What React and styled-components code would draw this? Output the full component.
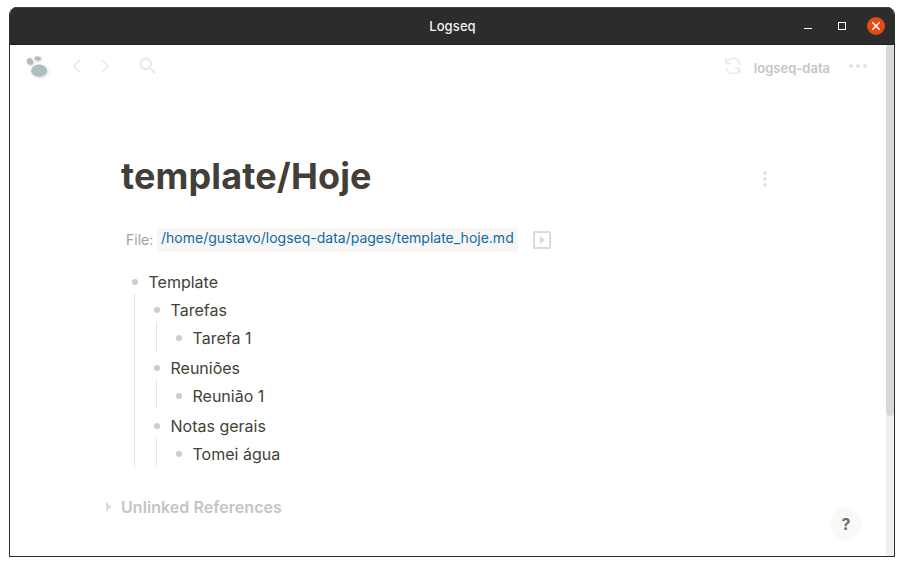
import React from "react";
import styled, { createGlobalStyle } from "styled-components";

const GlobalStyle = createGlobalStyle`
  * { box-sizing: border-box; }
  body { margin: 0; background: #fff; overflow: hidden; font-family: Inter, sans-serif; color: #433f38; }
`;

const Window = styled.div`
  display: flex;
  flex-direction: column;
  width: 886px;
  height: 550px;
  margin: 7px 9px 9px;
  border: 1px solid #2c2c2c;
  border-top: 0;
  border-radius: 8px 8px 0 0;
  overflow: hidden;
  background: #fff;
`;

const TitleBar = styled.header`
  display: grid;
  grid-template-columns: 1fr auto 1fr;
  align-items: center;
  flex: none;
  height: 38px;
  padding-right: 9px;
  background: #2c2c2c;
  border-top: 1px solid #454545;
  border-bottom: 1px solid #202020;
`;

const WindowTitle = styled.div`
  grid-column: 2;
  padding-left: 10px;
  font-size: 13px;
  line-height: 18px;
  font-weight: 500;
  letter-spacing: 0.1px;
  color: #f2f2f2;
`;

const WindowControls = styled.div`
  display: flex;
  justify-content: flex-end;
  svg { display: block; }
`;

const Body = styled.div`
  display: flex;
  flex: 1;
  min-height: 0;
`;

const Main = styled.main`
  position: relative;
  flex: 1;
`;

const ScrollTrack = styled.div`
  width: 8px;
  background: #f0f0f0;
`;

const ScrollThumb = styled.div`
  height: 371px;
  border-radius: 4px;
  background: #d8d8d8;
`;

const Toolbar = styled.nav`
  display: flex;
  align-items: center;
  height: 44px;
  padding: 0 16px 0 12px;
  svg { display: block; flex: none; }
`;

const LogoMark = styled.svg`
  filter: drop-shadow(1px 1px 1.5px rgba(0, 0, 0, 0.16));
`;

const Spacer = styled.div`
  flex: 1;
`;

const RepoName = styled.div`
  margin: 1px 16px 0 12px;
  font-size: 13px;
  line-height: 18px;
  font-weight: 600;
  color: #c6c5c3;
`;

const RaisedIcon = styled.svg`
  margin-bottom: 2px;
`;

const Page = styled.article`
  padding: 64px 115px 0 111px;
`;

const PageHeader = styled.div`
  display: flex;
  align-items: center;
  justify-content: space-between;
  height: 46px;
`;

const PageTitle = styled.h1`
  margin: 0;
  font-size: 36px;
  line-height: 46px;
  font-weight: 700;
  letter-spacing: 0.13px;
`;

const FileRow = styled.div`
  display: flex;
  align-items: center;
  height: 24px;
  margin: 29px 0 0 5px;
  font-size: 14px;
`;

const FileLabel = styled.span`
  width: 31px;
  padding-bottom: 1px;
  color: #a3a19d;
`;

const FilePath = styled.a`
  height: 24px;
  padding: 0 4px;
  border-radius: 3px;
  background: #f7f6f5;
  line-height: 20px;
  color: #106ba3;
`;

const PlayIcon = styled.svg`
  margin-left: 15px;
`;

const Outline = styled.div`
  margin: 14px 0 0 9px;
`;

const BlockRow = styled.div`
  display: flex;
  align-items: center;
  gap: 10.5px;
  height: 28px;
  padding: 4px 0 0 2px;
  font-size: 16px;
  line-height: 24px;
`;

const Bullet = styled.span`
  width: 6px;
  height: 6px;
  border-radius: 50%;
  background: #cdcccb;
`;

const Children = styled.div`
  margin: 0 0 ${(p) => (p.$last ? 0 : 1)}px 4px;
  padding: 0 0 ${(p) => (p.$leaf ? 1 : 0)}px 17px;
  border-left: 1px solid #e6e5e4;
`;

const References = styled.section`
  display: flex;
  align-items: center;
  gap: 9px;
  height: 24px;
  margin: 28px 0 0 -15px;
  font-size: 16px;
  font-weight: 600;
  letter-spacing: 0.06px;
  color: #c6c5c3;
`;

const HelpButton = styled.button`
  position: absolute;
  right: 24px;
  bottom: 16px;
  width: 32px;
  height: 32px;
  padding: 0;
  border: 0;
  border-radius: 50%;
  background: #f9f9f7;
  font: 700 16px/32px Inter, sans-serif;
  color: #716f6a;
`;

const outline = {
  text: "Template",
  children: [
    { text: "Tarefas", children: [{ text: "Tarefa 1" }] },
    { text: "Reuniões", children: [{ text: "Reunião 1" }] },
    { text: "Notas gerais", children: [{ text: "Tomei água" }] },
  ],
};

function Block({ block, last = true }) {
  return (
    <div>
      <BlockRow><Bullet /><span>{block.text}</span></BlockRow>
      {block.children && (
        <Children $last={last} $leaf={!block.children[0].children}>
          {block.children.map((child, i) => (
            <Block key={child.text} block={child} last={i === block.children.length - 1} />
          ))}
        </Children>
      )}
    </div>
  );
}

function Controls() {
  return (
    <WindowControls>
      <svg width="81" height="20" fill="none">
        <path d="M18 12.5h8" stroke="#fff" />
        <rect x="52.5" y="6.5" width="7" height="7" stroke="#fff" />
      </svg>
      <svg width="18" height="20" fill="none">
        <circle cx="9" cy="10" r="9" fill="#e24a17" />
        <path d="m5.3 6.3 7.4 7.4m0-7.4-7.4 7.4" stroke="#fff" strokeWidth="1.4" />
      </svg>
    </WindowControls>
  );
}

function Logo() {
  return (
    <LogoMark width="32" height="32">
      <g fill="#afbdc1">
        <ellipse cx="17" cy="19.7" rx="8" ry="6.1" />
        <ellipse cx="8" cy="10.5" rx="3.4" ry="3" transform="rotate(45 8 10.5)" />
        <ellipse cx="15.8" cy="7.5" rx="3.4" ry="2.1" transform="rotate(5 15.8 7.5)" />
      </g>
    </LogoMark>
  );
}

export default function App() {
  return (
    <>
      <GlobalStyle />
      <Window>
        <TitleBar>
          <WindowTitle>Logseq</WindowTitle>
          <Controls />
        </TitleBar>
        <Body>
          <Main>
            <Toolbar>
              <Logo />
              <svg width="80" height="24" fill="none" stroke="#e9e8e7" strokeWidth="1.5">
                <path d="m26 4.8-6.2 6.2 6.2 6.2M48 4.8l6.2 6.2-6.2 6.2" />
              </svg>
              <svg width="24" height="24" fill="none" stroke="#e9e8e7" strokeWidth="2">
                <circle cx="11.8" cy="8.7" r="5.3" />
                <path d="m15.7 12.6 5.5 5.5" />
              </svg>
              <Spacer />
              <RaisedIcon width="18" height="18" viewBox="0 0 18 18" fill="none" stroke="#eae9e8" strokeWidth="1.5">
                <path d="M1.9 1.5v5h5M2.2 6.2A7 7 0 0 1 15.8 7.6M16.1 16.5v-5h-5M15.8 11.8A7 7 0 0 1 2.2 10.4" />
              </RaisedIcon>
              <RepoName>logseq-data</RepoName>
              <RaisedIcon width="24" height="6" fill="#e4e3e2">
                <circle cx="5" cy="3" r="2" /><circle cx="12" cy="3" r="2" /><circle cx="19" cy="3" r="2" />
              </RaisedIcon>
            </Toolbar>
            <Page>
              <PageHeader>
                <PageTitle>template/Hoje</PageTitle>
                <svg width="12" height="22" fill="#e4e3e0">
                  <circle cx="6" cy="8" r="1.9" /><circle cx="6" cy="14" r="1.9" /><circle cx="6" cy="20" r="1.9" />
                </svg>
              </PageHeader>
              <FileRow>
                <FileLabel>File:</FileLabel>
                <FilePath>/home/gustavo/logseq-data/pages/template_hoje.md</FilePath>
                <PlayIcon width="18" height="18" fill="none">
                  <rect x="1" y="1" width="16" height="16" rx="0.5" stroke="#dddcd7" strokeWidth="2" />
                  <path d="M7 5v8l4.7-4z" fill="#dddcd7" />
                </PlayIcon>
              </FileRow>
              <Outline><Block block={outline} /></Outline>
              <References>
                <svg width="6" height="10"><path d="M0 0v10l5.5-5z" fill="#dddcd7" /></svg>
                <span>Unlinked References</span>
              </References>
            </Page>
            <HelpButton>?</HelpButton>
          </Main>
          <ScrollTrack><ScrollThumb /></ScrollTrack>
        </Body>
      </Window>
    </>
  );
}
